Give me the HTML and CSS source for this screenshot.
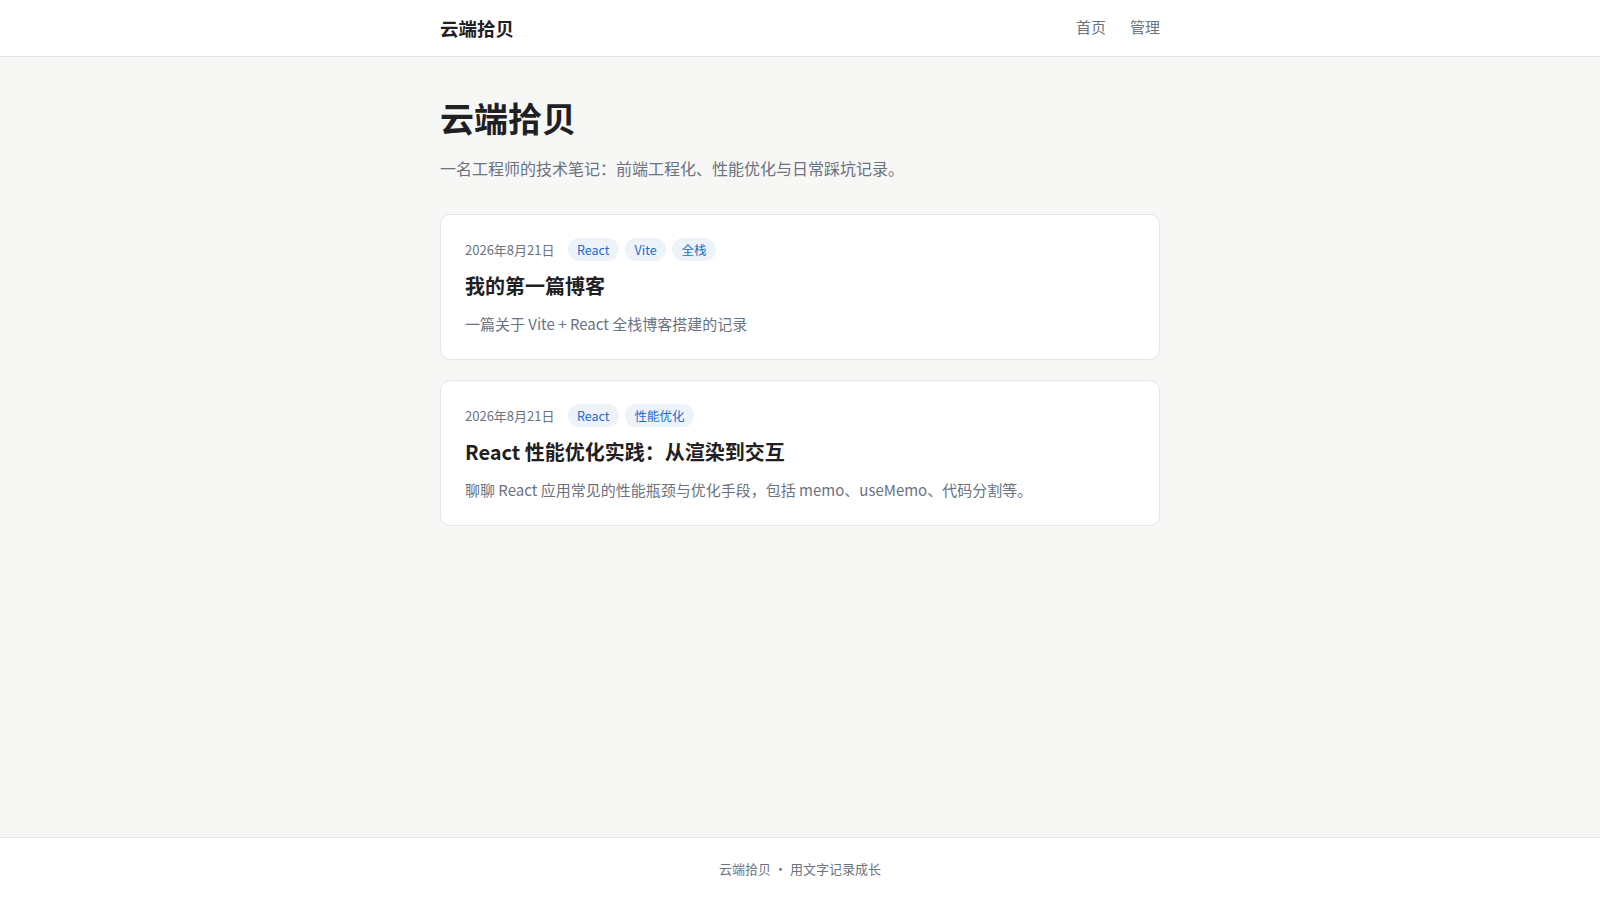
FILE: index.html
```html
<!DOCTYPE html>
<html lang="zh-CN">
<head>
<meta charset="utf-8">
<title>云端拾贝</title>
<link rel="stylesheet" href="styles.css">
</head>
<body>
<div class="page">
  <header class="site-header">
    <div class="container header-inner">
      <a class="logo" href="#">云端拾贝</a>
      <nav class="nav">
        <a href="#">首页</a>
        <a href="#">管理</a>
      </nav>
    </div>
  </header>
  <main class="main">
    <div class="container">
      <h1 class="title">云端拾贝</h1>
      <p class="subtitle">一名工程师的技术笔记：前端工程化、性能优化与日常踩坑记录。</p>
      <div class="post-list">
        <article class="card">
          <div class="meta">
            <span class="date">2026年8月21日</span>
            <div class="tags">
              <span class="tag">React</span>
              <span class="tag">Vite</span>
              <span class="tag">全栈</span>
            </div>
          </div>
          <h2 class="post-title">我的第一篇博客</h2>
          <p class="post-desc">一篇关于 Vite + React 全栈博客搭建的记录</p>
        </article>
        <article class="card">
          <div class="meta">
            <span class="date">2026年8月21日</span>
            <div class="tags">
              <span class="tag">React</span>
              <span class="tag">性能优化</span>
            </div>
          </div>
          <h2 class="post-title">React 性能优化实践：从渲染到交互</h2>
          <p class="post-desc">聊聊 React 应用常见的性能瓶颈与优化手段，包括 memo、useMemo、代码分割等。</p>
        </article>
      </div>
    </div>
  </main>
  <footer class="site-footer">
    <span>云端拾贝</span><span class="dot">·</span><span>用文字记录成长</span>
  </footer>
</div>
</body>
</html>
```

FILE: styles.css
```css
* { box-sizing: border-box; }
html, body { margin: 0; padding: 0; }
body {
  font-family: "Noto Sans CJK SC", "Noto Sans", sans-serif;
  background: #f7f7f6;
  color: #1f2023;
}
a { text-decoration: none; color: inherit; }
.page {
  min-height: 100vh;
  display: flex;
  flex-direction: column;
}
.container {
  width: 720px;
  margin: 0 auto;
}
.site-header {
  background: #fff;
  border-bottom: 1px solid #e6e6e6;
}
.header-inner {
  height: 56px;
  display: flex;
  align-items: center;
  justify-content: space-between;
}
.logo {
  font-size: 18.5px;
  line-height: 24px;
  font-weight: 700;
  color: #1f2023;
}
.nav {
  display: flex;
  gap: 24px;
  margin-top: -2px;
}
.nav a {
  font-size: 15px;
  line-height: 22px;
  color: #6b7280;
}
.main {
  flex: 1;
  padding: 39px 0 40px;
}
.title {
  margin: 0;
  font-size: 34px;
  line-height: 44px;
  font-weight: 700;
  color: #1f2023;
}
.subtitle {
  margin: 15px 0 0;
  font-size: 16px;
  line-height: 26px;
  color: #6b7280;
}
.post-list {
  margin-top: 33px;
  display: flex;
  flex-direction: column;
  gap: 20px;
}
.card {
  background: #fff;
  border: 1px solid #e6e6e6;
  border-radius: 10px;
  padding: 22px 24px 23px;
}
.meta {
  display: flex;
  align-items: center;
  gap: 13px;
  height: 24px;
}
.date {
  font-size: 13px;
  color: #6b7280;
}
.tags {
  display: flex;
  gap: 6px;
}
.tag {
  font-size: 12.5px;
  line-height: 19px;
  padding: 2px 9.5px;
  border-radius: 999px;
  background: #eef3fa;
  color: #1d6bc7;
}
.post-title {
  margin: 11px 0 0;
  font-size: 20px;
  line-height: 28px;
  font-weight: 700;
  color: #1f2023;
}
.post-desc {
  margin: 12px 0 0;
  font-size: 15px;
  line-height: 24px;
  color: #6b7280;
}
.site-footer {
  background: #fff;
  border-top: 1px solid #e6e6e6;
  padding: 21px 0;
  text-align: center;
  font-size: 13px;
  line-height: 20px;
  color: #6b7280;
}
.dot {
  margin: 0 3px;
}
```
